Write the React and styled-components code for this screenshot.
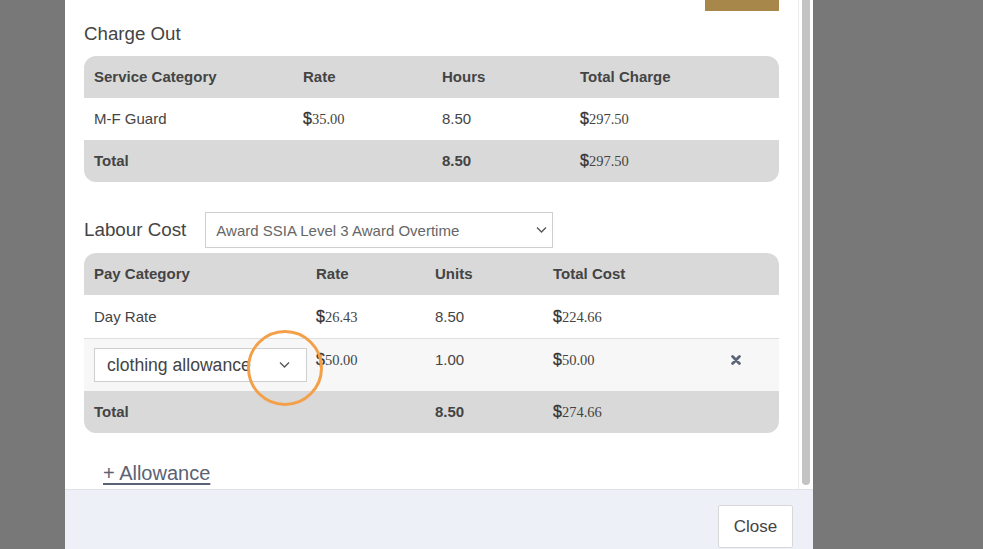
import React from "react";
import styled, { createGlobalStyle } from "styled-components";

const GlobalStyle = createGlobalStyle`
  html, body {
    margin: 0;
    padding: 0;
    background: #787878;
    font-family: "Liberation Sans", Arial, sans-serif;
    overflow: hidden;
  }
  * { box-sizing: border-box; }
`;

const Backdrop = styled.div`
  display: flex;
  width: 983px;
  height: 549px;
  padding-left: 65px;
`;

const Modal = styled.div`
  width: 748px;
  height: 549px;
  display: flex;
  flex-direction: column;
  background: #fff;
`;

const Body = styled.div`
  height: 489px;
  display: flex;
`;

const Content = styled.div`
  flex: 1;
  overflow: hidden;
  padding: 0 19px 0 19px;
  display: flex;
  flex-direction: column;
`;

const ScrollTrack = styled.div`
  width: 15px;
  border-left: 1px solid #ececec;
  padding: 0 3px 4px 3px;
  display: flex;
`;

const ScrollThumb = styled.div`
  flex: 1;
  background: #c3c3c3;
  border-radius: 0 0 4px 4px;
`;

const TopBar = styled.div`
  height: 11px;
  display: flex;
  justify-content: flex-end;
`;

const GoldButton = styled.div`
  width: 74px;
  height: 11px;
  background: #a8874b;
`;

const Heading = styled.h3`
  margin: 12px 0 11px;
  font-size: 18.7px;
  line-height: 22px;
  font-weight: normal;
  color: #444;
`;

const Table = styled.div`
  border-radius: 12px;
  overflow: hidden;
  position: relative;
`;

const Row = styled.div`
  display: grid;
  grid-template-columns: ${(p) => p.$cols};
  align-items: ${(p) => (p.$top ? "start" : "center")};
  height: ${(p) => p.$h || 42}px;
  background: ${(p) =>
    p.$variant === "head" || p.$variant === "total"
      ? "#d9d9d9"
      : p.$variant === "alt"
      ? "#f7f7f7"
      : "#fff"};
  border-top: ${(p) => (p.$divider ? "1px solid #dedede" : "none")};
  padding-top: ${(p) => (p.$top ? "9px" : "0")};
  font-size: 15px;
  color: #444;
  font-weight: ${(p) => (p.$variant === "head" || p.$variant === "total" ? "bold" : "normal")};
  position: relative;
`;

const Cell = styled.div`
  padding: 0 10px;
  line-height: ${(p) => (p.$top ? "24px" : "20px")};
  white-space: nowrap;
`;

const Dollar = styled.span`
  font-family: "Liberation Sans", Arial, sans-serif;
  font-size: 16px;
  font-weight: normal;
  color: #333;
  -webkit-text-stroke: 0.3px #333;
`;

const Digits = styled.span`
  font-family: "Liberation Serif", "Times New Roman", serif;
  font-size: 14.5px;
  font-weight: normal;
  color: #444;
`;

const Money = ({ v }) => (
  <>
    <Dollar>$</Dollar>
    <Digits>{v}</Digits>
  </>
);

const LabourRow = styled.div`
  margin-top: 30px;
  margin-bottom: 5px;
  display: flex;
  align-items: center;
  gap: 19px;
`;

const Label = styled.span`
  font-size: 18.8px;
  color: #444;
`;

const SelectWrap = styled.div`
  position: relative;
  width: ${(p) => p.$w}px;
  height: ${(p) => p.$h}px;
`;

const Select = styled.select`
  appearance: none;
  -webkit-appearance: none;
  width: 100%;
  height: 100%;
  border: 1px solid #cfcfcf;
  border-radius: 0;
  background: #fff;
  font-family: "Liberation Sans", Arial, sans-serif;
  font-size: ${(p) => p.$fs}px;
  color: ${(p) => p.$color};
  padding: 0 30px 0 ${(p) => p.$pl}px;
  outline: none;
`;

const Chevron = styled.svg`
  position: absolute;
  right: ${(p) => p.$r}px;
  top: 50%;
  transform: translateY(-50%);
  pointer-events: none;
`;

const Highlight = styled.div`
  position: absolute;
  z-index: 2;
  left: 163px;
  top: -9px;
  width: 76px;
  height: 76px;
  border: 3px solid #f4a04a;
  border-radius: 50%;
  pointer-events: none;
`;

const RemoveIcon = styled.svg`
  display: block;
  margin: 7px 0 0 0;
`;

const AllowanceLink = styled.a`
  margin: 29px 0 0 19px;
  font-size: 20px;
  line-height: 22px;
  color: #5b6275;
  text-decoration: underline;
  text-underline-offset: 3px;
  align-self: flex-start;
  cursor: pointer;
`;

const Footer = styled.div`
  height: 60px;
  background: #eef0f7;
  border-top: 1px solid #dfe2ea;
  display: flex;
  justify-content: flex-end;
  align-items: flex-start;
  padding: 15px 20px 0 0;
`;

const CloseButton = styled.button`
  width: 75px;
  height: 43px;
  background: #fff;
  border: 1px solid #d8d8d8;
  border-radius: 2px;
  font-family: "Liberation Sans", Arial, sans-serif;
  font-size: 17px;
  color: #444;
`;

const ChevronIcon = ({ r }) => (
  <Chevron $r={r} width="11" height="7" viewBox="0 0 11 7">
    <path d="M1 1l4.5 4.5L10 1" fill="none" stroke="#555" strokeWidth="1.3" />
  </Chevron>
);

const Cross = () => (
  <RemoveIcon width="10" height="10" viewBox="0 0 10 10">
    <path d="M1.6 1.6L8.4 8.4M8.4 1.6L1.6 8.4" stroke="#5b6477" strokeWidth="2.8" strokeLinecap="round" />
  </RemoveIcon>
);

const chargeCols = "209px 139px 138px 209px";
const labourCols = "222px 119px 118px 178px 58px";

export default function App() {
  return (
    <>
      <GlobalStyle />
      <Backdrop>
        <Modal>
          <Body>
            <Content>
              <TopBar>
                <GoldButton />
              </TopBar>
              <Heading>Charge Out</Heading>
              <Table>
                <Row $cols={chargeCols} $variant="head">
                  <Cell>Service Category</Cell>
                  <Cell>Rate</Cell>
                  <Cell>Hours</Cell>
                  <Cell>Total Charge</Cell>
                </Row>
                <Row $cols={chargeCols}>
                  <Cell>M-F Guard</Cell>
                  <Cell><Money v="35.00" /></Cell>
                  <Cell>8.50</Cell>
                  <Cell><Money v="297.50" /></Cell>
                </Row>
                <Row $cols={chargeCols} $variant="total">
                  <Cell>Total</Cell>
                  <Cell />
                  <Cell>8.50</Cell>
                  <Cell><Money v="297.50" /></Cell>
                </Row>
              </Table>

              <LabourRow>
                <Label>Labour Cost</Label>
                <SelectWrap $w={348} $h={36}>
                  <Select $fs={15} $color="#666" $pl={10} defaultValue="ot">
                    <option value="ot">Award SSIA Level 3 Award Overtime</option>
                  </Select>
                  <ChevronIcon r={6} />
                </SelectWrap>
              </LabourRow>

              <Table>
                <Row $cols={labourCols} $variant="head">
                  <Cell>Pay Category</Cell>
                  <Cell>Rate</Cell>
                  <Cell>Units</Cell>
                  <Cell>Total Cost</Cell>
                  <Cell />
                </Row>
                <Row $cols={labourCols} $h={43}>
                  <Cell>Day Rate</Cell>
                  <Cell><Money v="26.43" /></Cell>
                  <Cell>8.50</Cell>
                  <Cell><Money v="224.66" /></Cell>
                  <Cell />
                </Row>
                <Row $cols={labourCols} $h={53} $variant="alt" $divider $top>
                  <Cell>
                    <SelectWrap $w={213} $h={34}>
                      <Select $fs={17.6} $color="#444" $pl={12} defaultValue="cl">
                        <option value="cl">clothing allowance</option>
                      </Select>
                      <ChevronIcon r={17} />
                    </SelectWrap>
                  </Cell>
                  <Cell $top><Money v="50.00" /></Cell>
                  <Cell $top>1.00</Cell>
                  <Cell $top><Money v="50.00" /></Cell>
                  <Cell $top><Cross /></Cell>
                  <Highlight />
                </Row>
                <Row $cols={labourCols} $variant="total">
                  <Cell>Total</Cell>
                  <Cell />
                  <Cell>8.50</Cell>
                  <Cell><Money v="274.66" /></Cell>
                  <Cell />
                </Row>
              </Table>

              <AllowanceLink>+ Allowance</AllowanceLink>
            </Content>
            <ScrollTrack>
              <ScrollThumb />
            </ScrollTrack>
          </Body>
          <Footer>
            <CloseButton>Close</CloseButton>
          </Footer>
        </Modal>
      </Backdrop>
    </>
  );
}
